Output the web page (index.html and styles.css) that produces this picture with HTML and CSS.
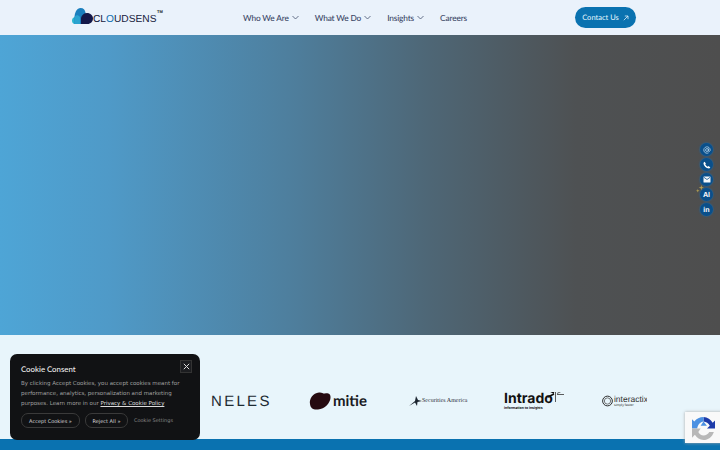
FILE: index.html
```html
<!DOCTYPE html>
<html lang="en">
<head>
  <meta charset="UTF-8">
  <title>Cloudsens</title>
  <link rel="stylesheet" href="styles.css">
</head>
<body>
  <header class="site-header">
    <a class="logo" href="#">
      <svg class="logo-mark" width="21" height="16" viewBox="0 0 21 16">
        <path fill="#2bb5cf" d="M3 16C1 16 0 14.500 0 12.500C0 10.500 1.300 9.300 3 9L8 16Z"/>
        <path fill="#1a7fbe" d="M2.500 16V8.500C3 4 5 0 8.500 0C11.500 0 13 2 13.500 4.500V16Z"/>
        <path fill="#2ba3d0" d="M2.500 16V9C4 7 6 6.500 8 9V16Z"/>
        <path fill="#14184a" d="M9 16V10C9.500 7 12 5 15 5C18.500 5 21 7.500 21 10.500C21 13.500 18.500 16 15.500 16Z"/>
      </svg>
      <span class="logo-text">CL<span class="logo-o">O</span>UDSENS</span>
      <span class="logo-tm">TM</span>
    </a>
    <nav class="main-nav">
      <a href="#">Who We Are <svg class="chev" width="7" height="5" viewBox="0 0 7 5"><path d="M.5 1 3.500 4 6.500 1" fill="none" stroke="#45506e" stroke-width=".8"/></svg></a>
      <a href="#">What We Do <svg class="chev" width="7" height="5" viewBox="0 0 7 5"><path d="M.5 1 3.500 4 6.500 1" fill="none" stroke="#45506e" stroke-width=".8"/></svg></a>
      <a href="#">Insights <svg class="chev" width="7" height="5" viewBox="0 0 7 5"><path d="M.5 1 3.500 4 6.500 1" fill="none" stroke="#45506e" stroke-width=".8"/></svg></a>
      <a href="#">Careers</a>
    </nav>
    <a class="contact-btn" href="#">Contact Us
      <svg width="6" height="6" viewBox="0 0 6 6"><path d="M.8 5.200 5 1M1.800 1H5V4.200" fill="none" stroke="#dff0fa" stroke-width=".8"/></svg>
    </a>
  </header>

  <section class="hero">
    <ul class="side-icons">
      <li>
        <svg width="8" height="8" viewBox="0 0 10 10"><circle cx="5" cy="5" r="1.800" fill="none" stroke="#b9d6ea"/><path d="M6.800 3.200V6C6.800 7.500 9 7.200 9 5A4 4 0 1 0 7 8.500" fill="none" stroke="#b9d6ea"/></svg>
      </li>
      <li>
        <svg width="8" height="8" viewBox="0 0 10 10"><path d="M2 .8 3.600 3 2.800 4.200C3.500 5.600 4.500 6.600 5.800 7.200L7 6.400 9.200 8C8.500 9.200 7.500 9.600 6 9.200 3.500 8.400 1.500 6.400.8 4 .4 2.500 .8 1.500 2 .8Z" fill="#fff"/></svg>
      </li>
      <li>
        <svg width="8" height="7" viewBox="0 0 9 8"><rect x=".5" y=".5" width="8" height="7" rx=".6" fill="#f2f6fa"/><path d="M1 1.500 4.500 4 8 1.500" fill="none" stroke="#0a4f8a" stroke-width=".9"/></svg>
      </li>
      <li class="side-ai">
        <svg class="sparkle" width="8" height="8" viewBox="0 0 9 9"><path d="M6 0 6.700 2.300 9 3 6.700 3.700 6 6 5.300 3.700 3 3 5.300 2.300ZM2 4.500 2.500 6 4 6.500 2.500 7 2 8.500 1.500 7 0 6.500 1.500 6Z" fill="#b39f52"/></svg>
        <span>AI</span>
      </li>
      <li><span>in</span></li>
    </ul>
  </section>

  <section class="clients">
    <div class="client-logos">
      <span class="client-neles">NELES</span>
      <span class="client-mitie">
        <svg width="22" height="18" viewBox="0 0 22 18"><path d="M1 12C0 7 4 1 10 .5 13 0 14 2 16 1.500 19 .8 22 2 21.500 6 21 11 16 17 9 17.500 4 18 1.500 16 1 12Z" fill="#260a10"/></svg>
        <span>mitie</span>
      </span>
      <span class="client-securities">
        <svg width="13" height="11" viewBox="0 0 13 11"><path d="M0 10 6 5 7 0 9 4 13 5 8.500 6 8 10 6 6.500Z" fill="#1c2530"/></svg>
        <span>Securities America</span>
      </span>
      <span class="client-intrado">
        <span class="intrado-word">Intrado<small>Information to Insights</small></span>
        <svg class="dragonfly" width="18" height="14" viewBox="0 0 18 14"><path d="M1 1 7 4M1 8 7 5" stroke="#111" stroke-width="1.600" fill="none"/><path d="M8.500 0V13M10 4.500 17 1M10 5.500H17" stroke="#333" stroke-width=".8" fill="none"/></svg>
      </span>
      <span class="client-interactix">
        <svg width="14" height="14" viewBox="0 0 14 14"><circle cx="7" cy="7" r="6.200" fill="none" stroke="#222" stroke-width="1.200"/><circle cx="7" cy="7" r="4" fill="none" stroke="#555"/></svg>
        <span class="interactix-word">interactix<small>simply faster</small></span>
      </span>
    </div>
  </section>

  <div class="footer-strip"></div>

  <aside class="cookie-box">
    <button class="cookie-close">
      <svg width="7" height="7" viewBox="0 0 7 7"><path d="M.8.800 6.200 6.200M6.200.800.800 6.200" stroke="#ddd" fill="none"/></svg>
    </button>
    <h4>Cookie Consent</h4>
    <p>By clicking Accept Cookies, you accept cookies meant for performance, analytics, personalization and marketing purposes. Learn more in our <a href="#">Privacy &amp; Cookie Policy</a></p>
    <div class="cookie-actions">
      <button class="cookie-btn btn-accept">Accept Cookies »</button>
      <button class="cookie-btn btn-reject">Reject All »</button>
      <span class="cookie-settings">Cookie Settings</span>
    </div>
  </aside>

  <div class="recaptcha">
    <svg width="23" height="23" viewBox="0 0 20 20">
      <path d="M10 0A10 10 0 0 1 18 5L20 3V10H13L15.500 7.500A7 7 0 0 0 10 4Z" fill="#1c3aa9"/>
      <path d="M10 0A10 10 0 0 0 2 4L0 2V10H4.500C5 7 7 4.500 10 4L7.500 7.500H13L10 4Z" fill="#4a90e2"/>
      <path d="M0 10V18L2.500 15.500A10 10 0 0 0 10 20C14 20 17.500 17.500 19 13H15C14 15 12 16 10 16 8 16 6.500 15 5.500 13L7.500 10Z" fill="#b8b8b8"/>
    </svg>
  </div>
</body>
</html>
```

FILE: styles.css
```css
* {
  box-sizing: border-box;
}
html, body {
  height: 450px;
  overflow: hidden;
}
body {
  margin: 0;
  font-family: "Inter", sans-serif;
  text-rendering: geometricPrecision;
  display: flex;
  flex-direction: column;
  position: relative;
  background-color: #e8f5fb;
}
a {
  text-decoration: none;
  color: inherit;
}

/* header */
.site-header {
  height: 35px;
  flex: none;
  background-color: #eaf2fb;
  display: flex;
  align-items: center;
  padding: 0 84px 0 72px;
}
.logo {
  display: flex;
  align-items: center;
  width: 171px;
  position: relative;
}
.logo-mark {
  margin-top: -3px;
}
.logo-text {
  font-family: "Liberation Sans", sans-serif;
  font-size: 10.200px;
  color: #16203c;
  margin-top: 3px;
}
.logo-o {
  color: #1673b4;
}
.logo-tm {
  position: absolute;
  left: 85px;
  top: -2px;
  font-family: "Liberation Sans", sans-serif;
  font-size: 4px;
  font-weight: bold;
  color: #222;
}
.main-nav {
  display: flex;
  gap: 16px;
  flex: 1;
  font-family: "Lato", sans-serif;
  font-size: 8.300px;
  letter-spacing: -.15px;
  font-weight: 500;
  color: #3b4766;
}
.main-nav a {
  display: flex;
  align-items: center;
  gap: 3px;
  white-space: nowrap;
}
.contact-btn {
  height: 21px;
  width: 61px;
  border-radius: 11px;
  background-color: #0a72b0;
  color: #dff0fa;
  font-family: "Lato", sans-serif;
  font-size: 7.500px;
  font-weight: 500;
  display: flex;
  align-items: center;
  justify-content: center;
  gap: 4px;
  white-space: nowrap;
}

/* hero */
.hero {
  height: 300px;
  flex: none;
  position: relative;
  background: linear-gradient(90deg, #4ea5d6 0%, #4f9ac8 15%, #4e7f9e 40%, #4e6675 60%, #4e5153 80%, #4e4e4e 100%);
}
.side-icons {
  list-style: none;
  margin: 0;
  padding: 0;
  position: absolute;
  right: 7px;
  top: 108px;
  display: flex;
  flex-direction: column;
  gap: 2px;
}
.side-icons li {
  width: 13px;
  height: 13px;
  border-radius: 50%;
  background-color: #0a4f8a;
  box-shadow: 0 0 2px #1272c0;
  color: #f2f6fa;
  font-size: 7px;
  font-weight: 700;
  display: flex;
  align-items: center;
  justify-content: center;
  position: relative;
}
.sparkle {
  position: absolute;
  left: -4px;
  top: -3px;
}

/* client logos */
.clients {
  flex: 1;
  display: flex;
  align-items: center;
  padding: 28px 73px 0 211px;
  overflow: hidden;
}
.client-logos {
  display: flex;
  align-items: center;
  width: 436px;
  overflow: hidden;
  color: #1c2530;
}
.client-logos > span {
  display: flex;
  align-items: center;
  flex: none;
}
.client-neles {
  font-family: "Liberation Sans", sans-serif;
  font-size: 15px;
  letter-spacing: 2.300px;
  width: 98px;
  color: #1d2b33;
}
.client-mitie {
  font-family: "Lato", sans-serif;
  font-size: 15px;
  font-weight: 700;
  width: 100px;
  gap: 2px;
  color: #1a1a22;
}
.client-securities {
  font-family: "Liberation Serif", serif;
  font-size: 6px;
  width: 95px;
  white-space: nowrap;
}
.client-intrado {
  width: 98px;
}
.intrado-word {
  font-size: 14px;
  font-weight: 700;
  line-height: 14px;
  color: #111;
  white-space: nowrap;
}
.intrado-word small {
  display: block;
  font-size: 3.500px;
  line-height: 4px;
}
.dragonfly {
  margin: -10px 0 0 -6px;
}
.client-interactix {
  width: 46px;
  overflow: hidden;
  gap: 1px;
}
.interactix-word {
  font-family: "Liberation Sans", sans-serif;
  font-size: 8.500px;
  line-height: 8px;
  color: #333;
  white-space: nowrap;
}
.interactix-word small {
  display: block;
  font-size: 3.500px;
  line-height: 4px;
}

.footer-strip {
  height: 11px;
  flex: none;
  background-color: #0a72b0;
}

/* cookie popup */
.cookie-box {
  position: absolute;
  left: 10px;
  top: 354px;
  width: 190px;
  height: 86px;
  background-color: #111214;
  border-radius: 7px;
  padding: 10px 11px;
  color: #a0a0a0;
  font-family: "DejaVu Sans", sans-serif;
}
.cookie-box h4 {
  margin: 0 0 4px;
  font-family: "Lato", sans-serif;
  font-size: 7.800px;
  line-height: 11px;
  font-weight: 500;
  color: #eee;
}
.cookie-box p {
  margin: 0;
  font-size: 5.500px;
  line-height: 10px;
}
.cookie-box p a {
  color: #ddd;
  text-decoration: underline;
}
.cookie-close {
  position: absolute;
  right: 8px;
  top: 6px;
  width: 12px;
  height: 13px;
  padding: 0;
  border: 1px solid #333;
  background-color: #1c1d20;
  display: flex;
  align-items: center;
  justify-content: center;
}
.cookie-actions {
  display: flex;
  align-items: center;
  gap: 5px;
  margin-top: 4px;
}
.cookie-btn {
  height: 15px;
  padding: 0;
  border: 1px solid #3a3a3a;
  border-radius: 7px;
  background-color: #111214;
  color: #ddd;
  font-family: "DejaVu Sans", sans-serif;
  font-size: 5px;
  white-space: nowrap;
}
.btn-accept {
  width: 59px;
}
.btn-reject {
  width: 43px;
}
.cookie-settings {
  font-size: 5px;
  color: #888;
  margin-left: 1px;
}

/* recaptcha badge */
.recaptcha {
  position: absolute;
  left: 685px;
  top: 412px;
  width: 40px;
  height: 31px;
  background-color: #f9f9f9;
  box-shadow: 0 0 3px #aaa;
  padding: 5px 7px;
}
```
